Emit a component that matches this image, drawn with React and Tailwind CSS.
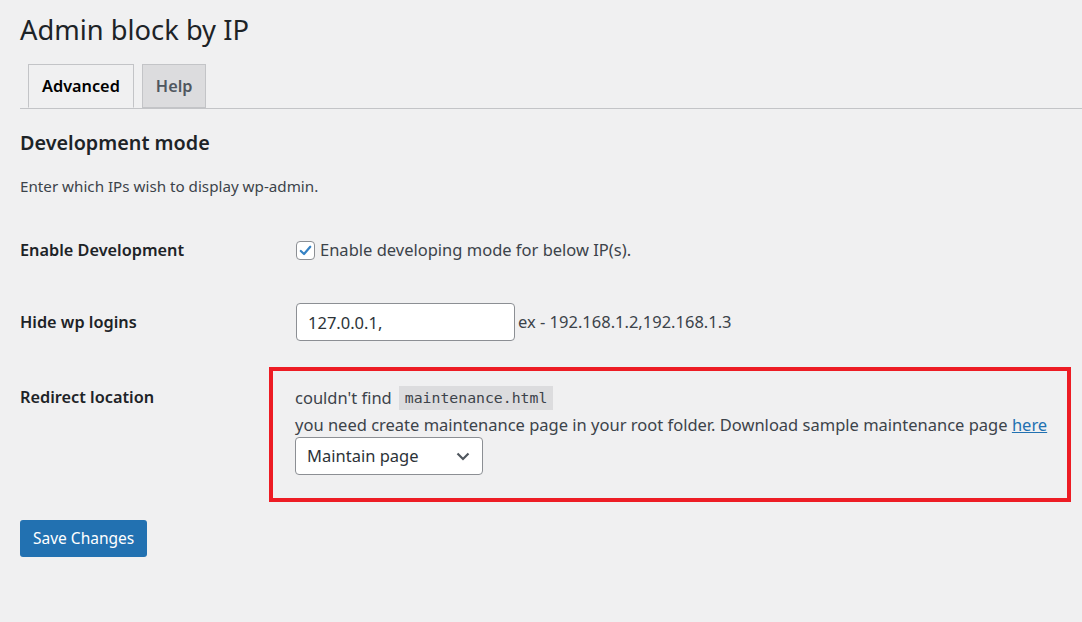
import React from "react";

// WP admin look-alike: settings page for the "Admin block by IP" plugin
const font = { fontFamily: '"Noto Sans", "Open Sans", sans-serif' };

const Tab = ({ label, active }) => (
    <div
        className={
            "h-[44px] px-[13px] flex items-center border border-[#c3c4c7] text-[16.3px] font-semibold " +
            (active ? "bg-[#f0f0f1] text-[#000] border-b-[#f0f0f1] -mb-px" : "bg-[#dcdcde] text-[#50575e]")
        }
    >
        {label}
    </div>
);

const Checkbox = () => (
    <span className="w-[19px] h-[19px] rounded-[4px] border border-[#8c8f94] bg-white flex items-center justify-center">
        <svg viewBox="0 0 20 20" className="w-[17px] h-[17px]">
            <path d="M4.5 10.5 L8.3 14.2 L15.6 5.6" fill="none" stroke="#3582c4" strokeWidth="2.6" strokeLinecap="round" strokeLinejoin="round" />
        </svg>
    </span>
);

const Label = ({ children, className = "" }) => (
    <div className={"text-[16.3px] leading-[22px] font-semibold text-[#1d2327] " + className}>{children}</div>
);

export default function App() {
    return (
        <div className="min-h-screen bg-[#f0f0f1] text-[#3c434a] pl-5" style={font}>
            <h1 className="pt-[13px] text-[27.3px] leading-[34px] text-[#1d2327]">Admin block by IP</h1>

            {/* tabs */}
            <div className="mt-[17px] flex gap-[8px] pl-[8px] border-b border-[#c3c4c7]">
                <Tab label="Advanced" active />
                <Tab label="Help" />
            </div>

            <h2 className="mt-[20px] text-[19.8px] leading-[28px] font-semibold text-[#1d2327]">Development mode</h2>
            <p className="mt-[19px] text-[15.2px] leading-[20px]">Enter which IPs wish to display wp-admin.</p>

            {/* form table */}
            <div className="grid grid-cols-[249px_1fr] pr-[11px] text-[16.5px]">
                <div className="mt-[35px] h-[38px] flex items-center">
                    <Label>Enable Development</Label>
                </div>
                <div className="mt-[35px] h-[38px] pl-[27px] flex items-center gap-[5px] leading-[22px]">
                    <Checkbox />
                    <span>Enable developing mode for below IP(s).</span>
                </div>

                <div className="mt-[34px] h-[38px] flex items-center">
                    <Label>Hide wp logins</Label>
                </div>
                <div className="mt-[34px] h-[38px] pl-[27px] flex items-center">
                    <input
                        defaultValue="127.0.0.1,"
                        className="w-[219px] h-[38px] px-[11px] bg-white border border-[#8c8f94] rounded-[4px] text-[#2c3338] outline-none"
                    />
                    <span className="ml-[3px]">ex - 192.168.1.2,192.168.1.3</span>
                </div>

                <div className="mt-[26px] pt-[19px]">
                    <Label>Redirect location</Label>
                </div>
                <div className="mt-[26px] border-[4px] border-[#ed1c24] pl-[22px] pt-[14px] pb-[23px] leading-[26px]">
                    <div className="flex items-center">
                        <span>couldn't find</span>
                        <code
                            className="ml-[7px] px-[6px] h-[24px] flex items-center bg-[#dcdcde] text-[14.8px] text-[#3c434a]"
                            style={{ fontFamily: '"DejaVu Sans Mono", "Liberation Mono", monospace' }}
                        >
                            maintenance.html
                        </code>
                    </div>
                    <div className="mt-[1px]">
                        you need create maintenance page in your root folder. Download sample maintenance page{" "}
                        <a href="#" className="text-[#2271b1] underline">here</a>
                    </div>
                    <div className="w-[188px] h-[38px] -mt-[1px] pl-[11px] pr-[9px] flex items-center justify-between bg-white border border-[#8c8f94] rounded-[4px] text-[#2c3338]">
                        <span>Maintain page</span>
                        <svg viewBox="0 0 20 20" className="w-[20px] h-[20px]">
                            <path d="M4.5 7.5 L10 13 L15.5 7.5" fill="none" stroke="#50575e" strokeWidth="2.2" />
                        </svg>
                    </div>
                </div>
            </div>

            <button className="mt-[18px] h-[37px] px-[13px] rounded-[3px] bg-[#2271b1] text-white text-[15.5px]">
                Save Changes
            </button>
        </div>
    );
}
